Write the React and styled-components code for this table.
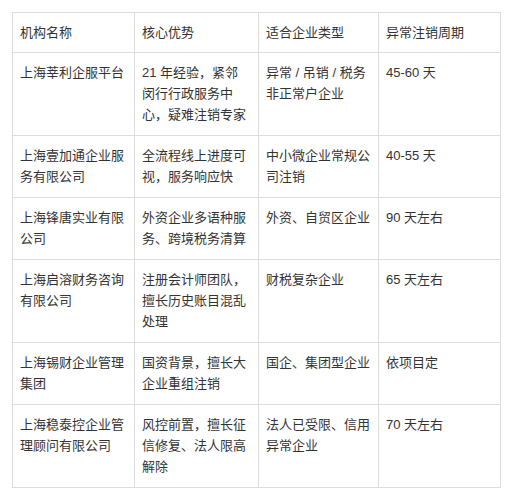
import styled, { createGlobalStyle } from "styled-components";

const GlobalStyle = createGlobalStyle`
  body {
    margin: 0;
    background: #fff;
    font-family: "Liberation Sans", "Noto Sans CJK SC", sans-serif;
  }
`;

const Page = styled.div`
  padding: 12px 7px 12px 12px;
`;

const Table = styled.table`
  width: 488px;
  border-collapse: collapse;
  table-layout: fixed;
  font-size: 13px;
  line-height: 21px;
  color: #333;
`;

const Cell = styled.td`
  border: 1px solid #dddddd;
  padding: 9px ${(p) => p.$pr || 4}px 10px 7px;
  vertical-align: top;
  text-align: left;
  word-break: break-all;
`;

const HeadCell = styled(Cell).attrs({ as: "th" })`
  font-weight: normal;
  padding-bottom: 9px;
`;

const cols = [
  { w: 122, pr: 4 },
  { w: 124, pr: 10 },
  { w: 120, pr: 4 },
  { w: 122, pr: 4 },
];
const heads = ["机构名称", "核心优势", "适合企业类型", "异常注销周期"];

const rows = [
  ["上海莘利企服平台", "21 年经验，紧邻闵行行政服务中心，疑难注销专家", "异常 / 吊销 / 税务非正常户企业", "45-60 天"],
  ["上海壹加通企业服务有限公司", "全流程线上进度可视，服务响应快", "中小微企业常规公司注销", "40-55 天"],
  ["上海锋唐实业有限公司", "外资企业多语种服务、跨境税务清算", "外资、自贸区企业", "90 天左右"],
  ["上海启溶财务咨询有限公司", "注册会计师团队，擅长历史账目混乱处理", "财税复杂企业", "65 天左右"],
  ["上海锡财企业管理集团", "国资背景，擅长大企业重组注销", "国企、集团型企业", "依项目定"],
  ["上海稳泰控企业管理顾问有限公司", "风控前置，擅长征信修复、法人限高解除", "法人已受限、信用异常企业", "70 天左右"],
];

export default function App() {
  return (
    <Page>
      <GlobalStyle />
      <Table>
        <colgroup>
          {cols.map((c, i) => (
            <col key={i} style={{ width: c.w }} />
          ))}
        </colgroup>
        <thead>
          <tr>
            {heads.map((h, j) => (
              <HeadCell key={h} $pr={cols[j].pr}>
                {h}
              </HeadCell>
            ))}
          </tr>
        </thead>
        <tbody>
          {rows.map((r, i) => (
            <tr key={i}>
              {r.map((c, j) => (
                <Cell key={j} $pr={cols[j].pr}>
                  {c}
                </Cell>
              ))}
            </tr>
          ))}
        </tbody>
      </Table>
    </Page>
  );
}
